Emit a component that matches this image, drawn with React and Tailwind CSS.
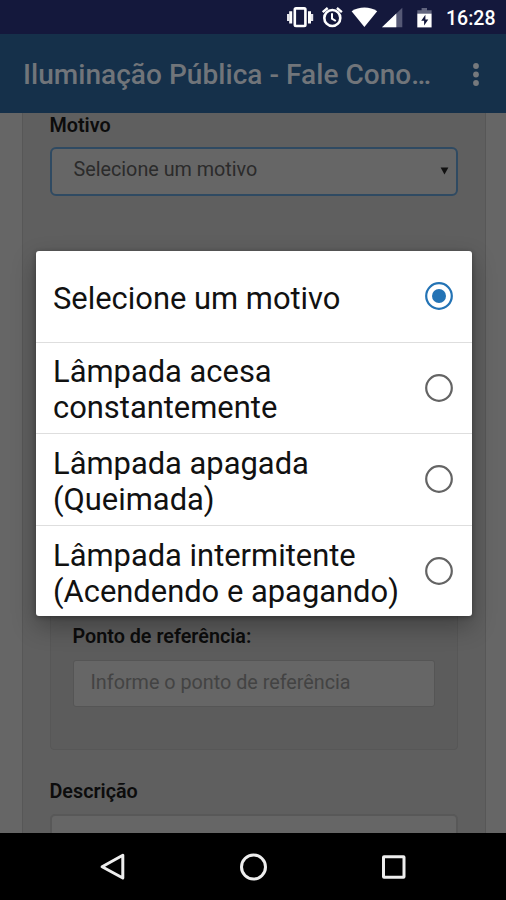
import React from 'react';

const options = [
  { lines: ['Selecione um motivo'], selected: true },
  { lines: ['Lâmpada acesa', 'constantemente'] },
  { lines: ['Lâmpada apagada', '(Queimada)'] },
  { lines: ['Lâmpada intermitente', '(Acendendo e apagando)'] },
];

function Radio({ selected }) {
  return (
    <svg width="30" height="30" viewBox="0 0 30 30" className="shrink-0">
      <circle cx="15" cy="15" r="12.8" fill="none" strokeWidth="2.2" stroke={selected ? '#2373b5' : '#646464'} />
      {selected && <circle cx="15" cy="15" r="7" fill="#2373b5" />}
    </svg>
  );
}

function StatusBar() {
  return (
    <header className="flex h-[34px] shrink-0 justify-end bg-[#14183c]">
      <svg width="160" height="34" viewBox="280 0 160 34" className="shrink-0">
        <rect x="294.8" y="8.4" width="10.6" height="17.6" rx="1.2" fill="none" stroke="#fff" strokeWidth="2.6" />
        <path d="M289.2 11.2h3v12.4h-3zM308 11.2h3v12.4h-3z" fill="#fff" />
        <path d="M287 14h2.6v7H287zM310.8 14h2.4v7h-2.4z" fill="#e4e4ea" />
        <g fill="none" stroke="#fff">
          <circle cx="332.3" cy="18" r="8" strokeWidth="2.6" />
          <path d="M332 13.2v5.4l3.8 2.4" strokeWidth="2" />
          <path d="M322.7 12.2l5-4.2M341.9 12.2l-5-4.2" strokeWidth="2.4" />
        </g>
        <path d="M364.4 27L351.6 11.2C359 6.3 370 6.3 377.2 11.2Z" fill="#fff" />
        <path d="M382 27.2L402.3 7.8V27.2Z" fill="#555875" />
        <path d="M382 27.2L396.3 13.5V27.2Z" fill="#fff" />
        <path d="M417.3 14v-3.7h4.3V8h5.4v2.3h4.6V14z" fill="#62657f" />
        <path d="M417.3 13.7h14.3v13.7h-14.3z" fill="#fff" />
        <path d="M425.4 14.8l-4.2 6h2.9v4.8l4.2-6.2h-2.9z" fill="#14183c" />
      </svg>
      <div className="w-[66px] pl-[6px] text-[19.5px] leading-[37px] font-medium text-white">16:28</div>
    </header>
  );
}

function AppBar() {
  return (
    <div className="flex h-[79px] shrink-0 items-center bg-[#15304a] pl-[23px]">
      <h1 className="w-[448px] pt-[3px] text-[28px] leading-[32px] font-medium tracking-[0.05px] whitespace-nowrap text-[#71757a]">
        Iluminação Pública - Fale Cono…
      </h1>
      <svg width="10" height="24" viewBox="0 0 10 24" fill="#76797d" className="mt-0.5">
        <circle cx="5" cy="3" r="2.9" />
        <circle cx="5" cy="11.5" r="2.9" />
        <circle cx="5" cy="20" r="2.9" />
      </svg>
    </div>
  );
}

function FormPage() {
  return (
    <main className="flex h-[720px] shrink-0 overflow-hidden bg-[#666666] pl-[21.5px] text-[19.75px] text-[#0c0c0c]">
      <div className="flex h-full w-[464px] flex-col border-x border-[#575757] bg-[#5f5f5f] px-[27px]">
        <label className="mt-[2px] h-[32px] shrink-0 text-[19.75px] leading-[22px] font-semibold">Motivo</label>
        <div className="flex h-[48.5px] shrink-0 items-center justify-between rounded-[6px] border-2 border-[#2f4a62] bg-[#666666] pr-[7px] pl-[22px] text-[#2b2b2b]">
          <span className="-mt-[2px]">Selecione um motivo</span>
          <svg width="9" height="8" viewBox="0 0 9 8" className="-mt-px">
            <path d="M0.6 0.5H8.4L4.5 7.5Z" fill="#111" />
          </svg>
        </div>
        <section className="mt-[80.5px] flex h-[474px] shrink-0 flex-col justify-end rounded-[4px] border border-[#575757] bg-[#5c5c5c] px-[22px] pb-[42px]">
          <label className="mb-[12px] text-[19.75px] leading-[22px] font-semibold">Ponto de referência:</label>
          <div className="flex h-[47px] items-center rounded-[3px] border border-[#555555] bg-[#666666] pl-[17px] text-[#434343]">
            <span className="-mt-[2px]">Informe o ponto de referência</span>
          </div>
        </section>
        <label className="mt-[31px] h-[33px] shrink-0 text-[19.75px] leading-[22px] font-semibold">Descrição</label>
        <div className="h-[60px] shrink-0 rounded-[5px] border-2 border-[#585858] bg-[#666666]" />
      </div>
    </main>
  );
}

function NavigationBar() {
  return (
    <nav className="flex h-[67px] shrink-0 items-center justify-center gap-[112px] bg-black">
      <svg width="28" height="30" viewBox="0 0 28 30" fill="none" stroke="#eee" strokeWidth="3" strokeLinejoin="round">
        <path d="M23.8 3.2V26L3.1 14.8Z" />
      </svg>
      <svg width="28" height="30" viewBox="0 0 28 30" fill="none" stroke="#eee" strokeWidth="3">
        <circle cx="14.5" cy="15" r="12" />
      </svg>
      <svg width="28" height="30" viewBox="0 0 28 30" fill="none" stroke="#eee" strokeWidth="3" strokeLinejoin="round">
        <rect x="4.5" y="4.8" width="20.5" height="20.5" rx="0.5" />
      </svg>
    </nav>
  );
}

export default function App() {
  return (
    <div className="relative flex h-[900px] w-[506px] flex-col overflow-hidden bg-black font-['Roboto',sans-serif]">
      <StatusBar />
      <AppBar />
      <FormPage />
      <NavigationBar />
      <div
        role="dialog"
        className="absolute top-[251px] left-[35.5px] flex h-[364.5px] w-[436px] flex-col rounded-[3px] bg-white shadow-[0_10px_24px_rgba(0,0,0,0.3),0_1px_5px_rgba(0,0,0,0.3)]"
      >
        {options.map((option) => (
          <div
            key={option.lines[0]}
            className="flex h-[91.5px] shrink-0 items-center justify-between border-b border-[#dedede] pr-[17.5px] pl-[17.5px] text-[30.9px] leading-[36px] text-[#111] last:border-b-0"
          >
            <div className="pt-[4.5px]">
              {option.lines.map((line) => (
                <div key={line} className="w-max whitespace-nowrap">{line}</div>
              ))}
            </div>
            <Radio selected={option.selected} />
          </div>
        ))}
      </div>
    </div>
  );
}
